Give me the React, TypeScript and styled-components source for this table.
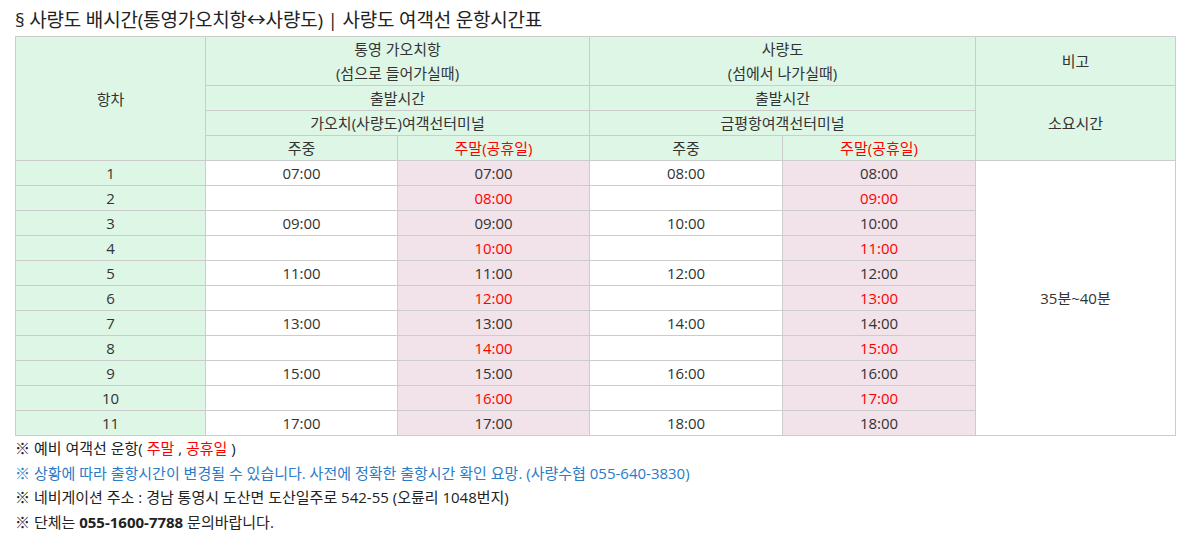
import React from "react";
import styled, {createGlobalStyle} from "styled-components";

const GlobalStyle = createGlobalStyle`
  body {
    margin: 0;
    background: #fff;
    font-family: "Open Sans", "Noto Sans CJK KR", sans-serif;
    color: #333;
  }
`;

const Page = styled.div`
  padding: 8px 18px 0 15px;
`;

const Title = styled.h3`
  margin: 0 0 4px;
  font-size: 19px;
  font-weight: normal;
  line-height: 24px;
  color: #222;
  letter-spacing: -0.2px;
`;

const Table = styled.table`
  width: 1160px;
  border-collapse: collapse;
  table-layout: fixed;
  font-size: 15px;
  text-align: center;
`;

const Th = styled.th<{ $red?: boolean }>`
  background: #def6e6;
  border: 1px solid #ccc;
  font-weight: normal;
  height: 24px;
  padding: 0;
  line-height: 24px;
  color: ${props => props.$red ? "#ff0000" : "#333"};
`;

const Td = styled.td<{ $tone?: "green" | "pink" | "white"; $red?: boolean }>`
  border: 1px solid #ccc;
  height: 24px;
  padding: 0;
  line-height: 24px;
  background: ${props => props.$tone === "green" ? "#def6e6" : props.$tone === "pink" ? "#f2e2e9" : "#fff"};
  color: ${props => props.$red ? "#ff0000" : "#333"};
`;

const Notes = styled.div`
  margin-top: 0;
  font-size: 15px;
  line-height: 24.5px;
`;

const Note = styled.p<{ $blue?: boolean }>`
  margin: 0;
  color: ${props => props.$blue ? "#2a7bc8" : "#222"};
`;

const Red = styled.span`
  color: #ff0000;
`;

const Strong = styled.b`
  font-weight: bold;
`;

interface Trip {
  no: number;
  goWeek?: string;
  goEnd: string;
  backWeek?: string;
  backEnd: string;
}

const trips: Trip[] = [
  {no: 1, goWeek: "07:00", goEnd: "07:00", backWeek: "08:00", backEnd: "08:00"},
  {no: 2, goEnd: "08:00", backEnd: "09:00"},
  {no: 3, goWeek: "09:00", goEnd: "09:00", backWeek: "10:00", backEnd: "10:00"},
  {no: 4, goEnd: "10:00", backEnd: "11:00"},
  {no: 5, goWeek: "11:00", goEnd: "11:00", backWeek: "12:00", backEnd: "12:00"},
  {no: 6, goEnd: "12:00", backEnd: "13:00"},
  {no: 7, goWeek: "13:00", goEnd: "13:00", backWeek: "14:00", backEnd: "14:00"},
  {no: 8, goEnd: "14:00", backEnd: "15:00"},
  {no: 9, goWeek: "15:00", goEnd: "15:00", backWeek: "16:00", backEnd: "16:00"},
  {no: 10, goEnd: "16:00", backEnd: "17:00"},
  {no: 11, goWeek: "17:00", goEnd: "17:00", backWeek: "18:00", backEnd: "18:00"},
];

export default function App(): React.JSX.Element {
  return (
    <Page>
      <GlobalStyle/>
      <Title>§ 사량도 배시간(통영가오치항↔사량도) | 사량도 여객선 운항시간표</Title>
      <Table>
        <colgroup>
          <col style={{width: 190}}/>
          <col style={{width: 192}}/>
          <col style={{width: 192}}/>
          <col style={{width: 193}}/>
          <col style={{width: 193}}/>
          <col style={{width: 200}}/>
        </colgroup>
        <thead>
          <tr>
            <Th rowSpan={4}>항차</Th>
            <Th colSpan={2} style={{height: 48}}>통영 가오치항<br/>(섬으로 들어가실때)</Th>
            <Th colSpan={2}>사량도<br/>(섬에서 나가실때)</Th>
            <Th>비고</Th>
          </tr>
          <tr>
            <Th colSpan={2}>출발시간</Th>
            <Th colSpan={2}>출발시간</Th>
            <Th rowSpan={3}>소요시간</Th>
          </tr>
          <tr>
            <Th colSpan={2}>가오치(사량도)여객선터미널</Th>
            <Th colSpan={2}>금평항여객선터미널</Th>
          </tr>
          <tr>
            <Th>주중</Th>
            <Th $red>주말(공휴일)</Th>
            <Th>주중</Th>
            <Th $red>주말(공휴일)</Th>
          </tr>
        </thead>
        <tbody>
          {trips.map((t, i) => (
            <tr key={t.no}>
              <Td $tone="green">{t.no}</Td>
              <Td>{t.goWeek}</Td>
              <Td $tone="pink" $red={!t.goWeek}>{t.goEnd}</Td>
              <Td>{t.backWeek}</Td>
              <Td $tone="pink" $red={!t.backWeek}>{t.backEnd}</Td>
              {i === 0 && <Td rowSpan={trips.length}>35분~40분</Td>}
            </tr>
          ))}
        </tbody>
      </Table>
      <Notes>
        <Note>※ 예비 여객선 운항( <Red>주말</Red> , <Red>공휴일</Red> )</Note>
        <Note $blue>※ 상황에 따라 출항시간이 변경될 수 있습니다. 사전에 정확한 출항시간 확인 요망. (사량수협 055-640-3830)</Note>
        <Note>※ 네비게이션 주소 : 경남 통영시 도산면 도산일주로 542-55 (오륜리 1048번지)</Note>
        <Note>※ 단체는 <Strong>055-1600-7788</Strong> 문의바랍니다.</Note>
      </Notes>
    </Page>
  );
}
